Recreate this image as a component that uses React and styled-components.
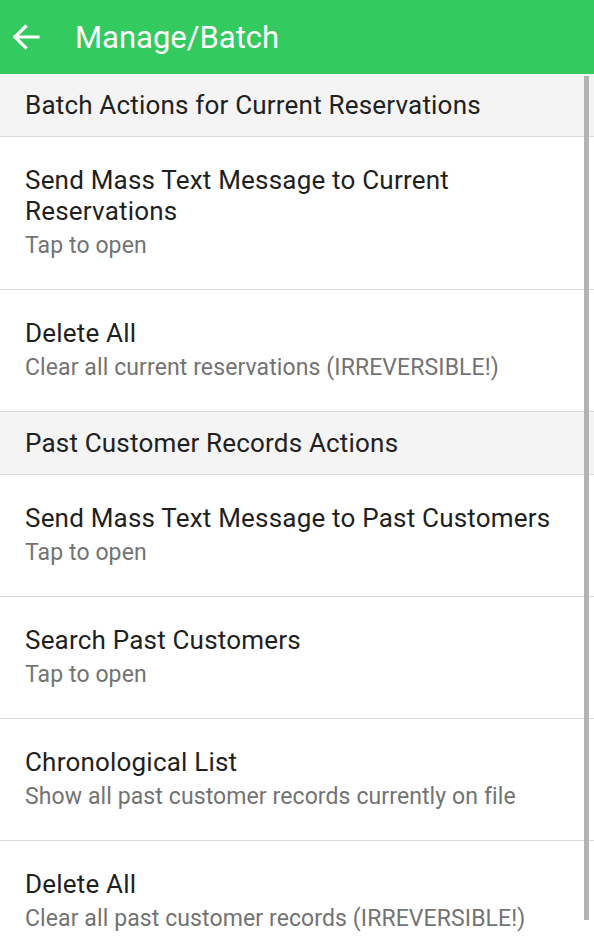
import React from "react";
import styled, { createGlobalStyle } from "styled-components";

const Global = createGlobalStyle`
  html, body { margin: 0; padding: 0; background: #fff; overflow: hidden; }
  body { font-family: Roboto, "Noto Sans", sans-serif; -webkit-font-smoothing: antialiased; }
`;

const Screen = styled.div`
  position: relative;
  width: 594px;
  height: 938px;
  overflow: hidden;
  background: #fff;
`;

const AppBar = styled.header`
  height: 74px;
  background: #33cb5f;
  display: flex;
  align-items: center;
  color: #fff;
  box-sizing: border-box;
  padding-left: 8px;
`;

const BackButton = styled.button`
  width: 36px;
  height: 36px;
  border: 0;
  padding: 0;
  background: transparent;
  display: flex;
  align-items: center;
  justify-content: center;
  margin-right: 31px;
`;

const Title = styled.h1`
  margin: 0;
  font-size: 31px;
  font-weight: 400;
  line-height: 1;
`;

const SectionHeader = styled.div`
  background: #f4f4f4;
  padding: 16px 25px 16px;
  font-size: 26px;
  line-height: 30px;
  letter-spacing: 0.19px;
  color: #212121;
  border-bottom: 1px solid #dadada;
`;

const Item = styled.div`
  padding: 28px 40px 29px 25px;
  border-bottom: 1px solid #dadada;
`;

const ItemTitle = styled.div`
  font-size: 26px;
  line-height: 31px;
  letter-spacing: 0.2px;
  color: #1f1f1f;
`;

const ItemSub = styled.div`
  margin-top: 5px;
  font-size: 23px;
  line-height: 28px;
  letter-spacing: 0.1px;
  color: #737373;
`;

const ScrollThumb = styled.div`
  position: absolute;
  right: 5px;
  top: 76px;
  width: 5px;
  height: 844px;
  background: #b3b3b3;
`;

const BackArrow = () => (
  <svg width="30" height="30" viewBox="0 0 30 30" fill="none">
    <path
      d="M27 15H4M14.5 4.5L4 15l10.5 10.5"
      stroke="#fff"
      strokeWidth="3.2"
      strokeLinecap="square"
      strokeLinejoin="miter"
    />
  </svg>
);

const sections = [
  {
    header: "Batch Actions for Current Reservations",
    items: [
      { title: "Send Mass Text Message to Current Reservations", sub: "Tap to open" },
      { title: "Delete All", sub: "Clear all current reservations (IRREVERSIBLE!)" },
    ],
  },
  {
    header: "Past Customer Records Actions",
    items: [
      { title: "Send Mass Text Message to Past Customers", sub: "Tap to open" },
      { title: "Search Past Customers", sub: "Tap to open" },
      { title: "Chronological List", sub: "Show all past customer records currently on file" },
      { title: "Delete All", sub: "Clear all past customer records (IRREVERSIBLE!)" },
    ],
  },
];

export default function App() {
  return (
    <Screen>
      <Global />
      <AppBar>
        <BackButton aria-label="Back">
          <BackArrow />
        </BackButton>
        <Title>Manage/Batch</Title>
      </AppBar>
      {sections.map((s) => (
        <React.Fragment key={s.header}>
          <SectionHeader>{s.header}</SectionHeader>
          {s.items.map((it, i) => (
            <Item key={i}>
              <ItemTitle>{it.title}</ItemTitle>
              <ItemSub>{it.sub}</ItemSub>
            </Item>
          ))}
        </React.Fragment>
      ))}
      <ScrollThumb />
    </Screen>
  );
}
